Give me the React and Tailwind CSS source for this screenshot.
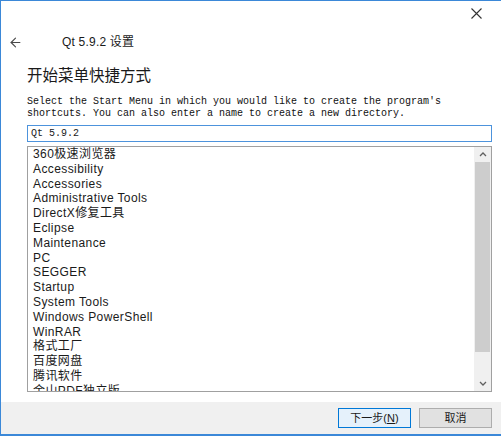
import { ArrowLeft } from 'lucide-react';

const folders = [
  '360极速浏览器',
  'Accessibility',
  'Accessories',
  'Administrative Tools',
  'DirectX修复工具',
  'Eclipse',
  'Maintenance',
  'PC',
  'SEGGER',
  'Startup',
  'System Tools',
  'Windows PowerShell',
  'WinRAR',
  '格式工厂',
  '百度网盘',
  '腾讯软件',
  '金山PDF独立版',
];

const uiFont = { fontFamily: '"Liberation Sans", "Noto Sans CJK SC", sans-serif' };
const monoFont = { fontFamily: '"Liberation Mono", "Noto Sans CJK SC", monospace' };

function App() {
  return (
    <div
      className="w-[501px] h-[436px] bg-white border-t border-l border-b-2 border-[#3b88d8] flex flex-col text-[#1a1a1a] overflow-hidden"
      style={uiFont}
    >
      {/* title bar */}
      <div className="h-[24px] flex items-center justify-end pr-[19px]">
        <svg width="11" height="11" viewBox="0 0 11 11" className="text-[#333]">
          <path d="M0.5 0.5 L10.5 10.5 M10.5 0.5 L0.5 10.5" stroke="currentColor" strokeWidth="1.1" />
        </svg>
      </div>

      {/* header */}
      <div className="h-[34px] flex items-center">
        <ArrowLeft size={15} strokeWidth={1.8} className="ml-[7px] text-[#4a4a4a]" />
        <span className="ml-[39px] text-[12px] tracking-[0.2px]">Qt 5.9.2 设置</span>
      </div>

      <div className="pl-[26px] pr-[8px]">
        <h1 className="mt-[7px] h-[20px] leading-[20px] text-[15.5px]">开始菜单快捷方式</h1>

        <p className="mt-[10px] text-[10px] leading-[12px] whitespace-pre text-[#111]" style={monoFont}>
          {"Select the Start Menu in which you would like to create the program's\nshortcuts. You can also enter a name to create a new directory."}
        </p>

        <div
          className="mt-[5px] h-[17px] w-[465px] border border-[#4d93dc] flex items-center pl-[3px] text-[10px]"
          style={monoFont}
        >
          Qt 5.9.2
        </div>

        <div className="mt-[4px] h-[246px] w-[465px] border border-[#a0a0a0] flex">
          <div className="flex-1 overflow-hidden pl-[5px]">
            {folders.map((name) => (
              <div key={name} className="h-[14.8px] leading-[14.8px] text-[12px] tracking-[0.4px] whitespace-nowrap">
                {name}
              </div>
            ))}
          </div>
          <div className="w-[17px] bg-[#f0f0f0] flex flex-col items-center">
            <div className="h-[15px] flex items-center justify-center">
              <svg width="8" height="5" viewBox="0 0 8 5">
                <path d="M1 4 L4 1 L7 4" fill="none" stroke="#606060" strokeWidth="1.3" />
              </svg>
            </div>
            <div className="w-[15px] h-[190px] bg-[#cdcdcd]" />
            <div className="flex-1" />
            <div className="h-[15px] flex items-center justify-center">
              <svg width="8" height="5" viewBox="0 0 8 5">
                <path d="M1 1 L4 4 L7 1" fill="none" stroke="#606060" strokeWidth="1.3" />
              </svg>
            </div>
          </div>
        </div>
      </div>

      <div className="flex-1" />

      {/* footer */}
      <div className="h-[32px] bg-[#f0f0f0] flex items-center justify-end gap-[8px] pr-[9px]">
        <button className="w-[73px] h-[20px] bg-[#e5f1fb] border border-[#0078d7] text-[11px] leading-none">
          下一步(<span className="underline">N</span>)
        </button>
        <button className="w-[73px] h-[20px] bg-[#e1e1e1] border border-[#adadad] text-[11px] leading-none">
          取消
        </button>
      </div>
    </div>
  );
}

export default App;
